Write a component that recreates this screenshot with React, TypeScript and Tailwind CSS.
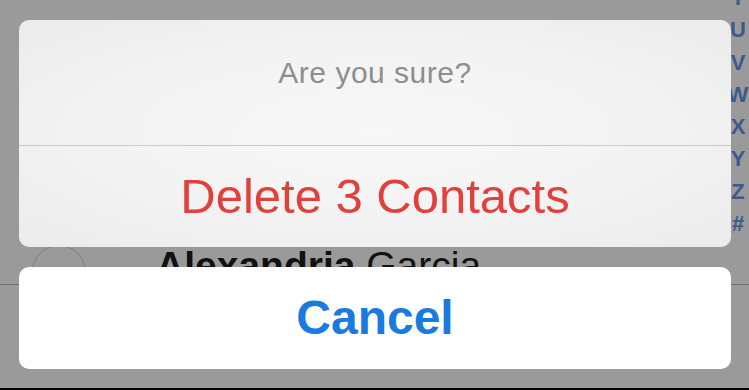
const indexLetters = ["T", "U", "V", "W", "X", "Y", "Z", "#"];

function ContactList() {
    return (
        <div className="relative h-full w-full bg-[#9a9a9a]">
            <div className="flex flex-col pt-[245px]">
                <div className="flex items-start h-[39px]">
                    <div className="ml-[32px] w-[54px] h-[54px] rounded-full border border-[#7d7d7d] shrink-0" />
                    <div className="ml-[70px] mt-[1px] text-[39px] leading-none text-[#111]">
                        <span className="font-bold">Alexandria</span> Garcia
                    </div>
                </div>
                <div className="h-px bg-[#6e6e6e]" />
            </div>
            <div className="absolute right-0 top-[-18px] flex flex-col items-center w-[22px]">
                {indexLetters.map((l) => (
                    <span key={l} className="h-[32.3px] leading-[32.3px] text-[22px] font-bold text-[#3c5a8c]">
                        {l}
                    </span>
                ))}
            </div>
        </div>
    );
}

function ActionSheet() {
    return (
        <div className="absolute inset-0 flex flex-col pl-[19px] pr-[18px] pt-[20px]">
            <div className="flex flex-col h-[227px] rounded-[10px] overflow-hidden bg-[radial-gradient(ellipse_at_center,#f8f8f8_0%,#f2f2f2_60%,#ebebeb_100%)]">
                <div className="flex h-[125px] items-center justify-center pb-[20px]">
                    <span className="text-[30px] text-[#8e8e8e] tracking-[0.5px]">Are you sure?</span>
                </div>
                <div className="h-px bg-[#c9c9c9]" />
                <div className="flex flex-1 items-center justify-center">
                    <span className="text-[49px] text-[#e2413b]">Delete 3 Contacts</span>
                </div>
            </div>
            <div className="mt-[20px] flex h-[102px] items-center justify-center rounded-[10px] bg-white">
                <span className="text-[48px] font-bold text-[#1b7ae0]">Cancel</span>
            </div>
        </div>
    );
}

export default function App() {
    return (
        <div className="flex flex-col w-[749px] h-[390px] overflow-hidden font-['Liberation_Sans',Arial,sans-serif]">
            <div className="relative flex-1">
                <ContactList />
                <ActionSheet />
            </div>
            <div className="h-[2px] bg-black" />
        </div>
    );
}
